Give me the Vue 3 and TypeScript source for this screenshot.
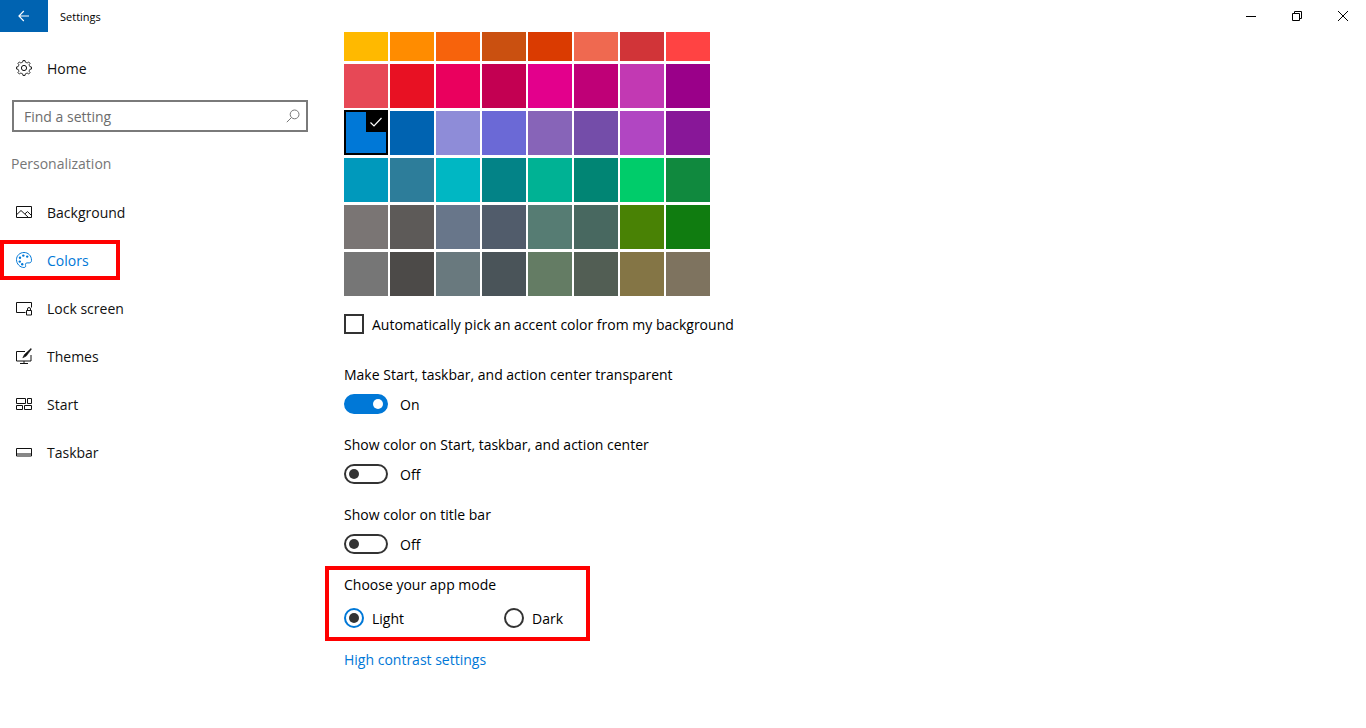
<script setup lang="ts">
const swatches: string[] = [
  '#FFB900','#FF8C00','#F7630C','#CA5010','#DA3B01','#EF6950','#D13438','#FF4343',
  '#E74856','#E81123','#EA005E','#C30052','#E3008C','#BF0077','#C239B3','#9A0089',
  '#0078D7','#0063B1','#8E8CD8','#6B69D6','#8764B8','#744DA9','#B146C2','#881798',
  '#0099BC','#2D7D9A','#00B7C3','#038387','#00B294','#018574','#00CC6A','#10893E',
  '#7A7574','#5D5A58','#68768A','#515C6B','#567C73','#486860','#498205','#107C10',
  '#767676','#4C4A48','#69797E','#4A5459','#647C64','#525E54','#847545','#7E735F',
]
const selected = 16

const gearPts: string[] = []
const teeth = 8
for (let i = 0; i < teeth; i++) {
  const a = (i / teeth) * Math.PI * 2
  const step = (Math.PI * 2) / teeth
  const pts: [number, number][] = [
    [5.9, a - step * 0.5],
    [6.1, a - step * 0.27],
    [7.6, a - step * 0.17],
    [7.6, a + step * 0.17],
    [6.1, a + step * 0.27],
  ]
  for (const [r, t] of pts) {
    gearPts.push(`${(8 + r * Math.cos(t)).toFixed(2)},${(8 + r * Math.sin(t)).toFixed(2)}`)
  }
}
const gear = gearPts.join(' ')

const nav = [
  { id: 'background', label: 'Background' },
  { id: 'colors', label: 'Colors' },
  { id: 'lock', label: 'Lock screen' },
  { id: 'themes', label: 'Themes' },
  { id: 'start', label: 'Start' },
  { id: 'taskbar', label: 'Taskbar' },
]
const toggles = [
  { label: 'Make Start, taskbar, and action center transparent', on: true },
  { label: 'Show color on Start, taskbar, and action center', on: false },
  { label: 'Show color on title bar', on: false },
]
</script>

<template>
  <div class="win">
    <header class="titlebar">
      <button class="back" aria-label="Back">
        <svg width="12" height="12" viewBox="0 0 12 12"><path d="M11 6H1M5.8 1 .9 6l4.9 5" fill="none" stroke="#fff" stroke-width="1.1"/></svg>
      </button>
      <span class="title">Settings</span>
      <div class="controls">
        <span class="ctl"><svg width="10" height="10" viewBox="0 0 10 10"><path d="M0 5.5h10" stroke="#000" stroke-width="1"/></svg></span>
        <span class="ctl"><svg width="10" height="10" viewBox="0 0 10 10"><path d="M.5 2.5h7v7h-7zM2.5 2.5v-2h7v7h-2" fill="none" stroke="#000" stroke-width="1"/></svg></span>
        <span class="ctl"><svg width="10" height="10" viewBox="0 0 10 10"><path d="M0 0l10 10M10 0 0 10" fill="none" stroke="#000" stroke-width="1"/></svg></span>
      </div>
    </header>

    <div class="body">
      <aside class="side">
        <div class="item">
          <svg class="ico" width="16" height="16" viewBox="0 0 16 16" fill="none" stroke="currentColor" stroke-width="1">
            <polygon :points="gear" stroke-width="0.9"/>
            <circle cx="8" cy="8" r="2.6"/>
          </svg>
          <span>Home</span>
        </div>
        <div class="search">
          <span>Find a setting</span>
          <svg width="14" height="14" viewBox="0 0 14 14" fill="none" stroke="#767676" stroke-width="1"><circle cx="8.6" cy="5.4" r="4.4"/><path d="M5.4 8.6.8 13.2"/></svg>
        </div>
        <div class="heading">Personalization</div>
        <div v-for="n in nav" :key="n.id" class="item" :class="{ active: n.id === 'colors' }">
          <svg class="ico" width="16" height="16" viewBox="0 0 16 16" fill="none" stroke="currentColor" stroke-width="1">
            <template v-if="n.id === 'background'">
              <path d="M.5 2.5h15v11H.5z"/>
              <path d="M.8 10.5 5 6.5l7.5 7M9 9.8l2.5-2.2 4 3.9"/>
            </template>
            <template v-else-if="n.id === 'colors'">
              <path d="M8 .5C3.8.5.5 3.6.5 7.6c0 4.300 3.500 7.900 7.400 7.900 1.500 0 2-1 1.700-2-.4-1.300-.1-2.600 1.500-2.600h2.100c1.400 0 2.300-1 2.300-2.600C15.500 3.700 12.200.5 8 .5Z"/>
              <g fill="currentColor" stroke="none">
                <circle cx="4" cy="5.800" r="1.200"/><circle cx="7.300" cy="3.600" r="1.200"/><circle cx="11.200" cy="4.600" r="1.200"/><circle cx="3.800" cy="9.600" r="1.200"/><circle cx="6.200" cy="12.300" r="1.200"/>
              </g>
            </template>
            <template v-else-if="n.id === 'lock'">
              <path d="M9.500 12.500H.5v-10h15v5"/>
              <path d="M10.500 10.500h5v4.500h-5zM11.500 10.500V9a1.500 1.500 0 0 1 3 0v1.500"/>
            </template>
            <template v-else-if="n.id === 'themes'">
              <path d="M9 3.500H.5v9.500h14.500V7M8 13v2M4 15.500h8"/>
              <path d="M15 .5 8.500 6.500 6.800 9.800l3.400-1.700L15.500 1Z" fill="currentColor" stroke-width=".6"/>
            </template>
            <template v-else-if="n.id === 'start'">
              <path d="M.5 2.500h9v5h-9zM11.500 2.500h4v5h-4zM.5 9.500h6v4h-6zM8.500 9.500h7v4h-7z"/>
            </template>
            <template v-else>
              <path d="M.5 4.500h15v7.500H.5zM.5 10h15"/>
            </template>
          </svg>
          <span>{{ n.label }}</span>
          <i v-if="n.id === 'colors'" class="mark mark-nav"></i>
        </div>
      </aside>

      <main class="main">
        <div class="grid">
          <div
            v-for="(c, i) in swatches"
            :key="i"
            class="sw"
            :class="{ sel: i === selected }"
            :style="{ background: c }"
          >
            <span v-if="i === selected" class="tick">
              <svg width="14" height="12" viewBox="0 0 14 12"><path d="M1.500 6.500 5 10l7.500-8" fill="none" stroke="#fff" stroke-width="1.200"/></svg>
            </span>
          </div>
        </div>

        <label class="check"><i class="box"></i><span>Automatically pick an accent color from my background</span></label>

        <section v-for="t in toggles" :key="t.label" class="tg">
          <div class="line">{{ t.label }}</div>
          <div class="tg-row">
            <i class="switch" :class="{ on: t.on }"><b></b></i>
            <span>{{ t.on ? 'On' : 'Off' }}</span>
          </div>
        </section>

        <section class="mode">
          <div class="line">Choose your app mode</div>
          <div class="radios">
            <div class="radio r1"><i class="dot on"><b></b></i><span>Light</span></div>
            <div class="radio"><i class="dot"></i><span>Dark</span></div>
          </div>
          <i class="mark mark-mode"></i>
        </section>

        <a class="link">High contrast settings</a>
      </main>
    </div>
  </div>
</template>

<style scoped>
.win { width: 1366px; height: 728px; display: flex; flex-direction: column; background: #fff; color: #000; font-family: "Open Sans", "Noto Sans", sans-serif; font-size: 14px; overflow: hidden; }
.titlebar { height: 32px; display: flex; align-items: center; flex: none; }
.back { width: 48px; height: 32px; background: #0063b1; border: 0; padding: 0; display: flex; align-items: center; justify-content: center; }
.title { margin-left: 12px; font-size: 11px; }
.controls { margin-left: auto; display: flex; }
.ctl { width: 46px; height: 32px; display: flex; align-items: center; justify-content: center; }
.body { flex: 1; display: flex; min-height: 0; }
.side { width: 320px; flex: none; padding: 12px 12px 0 0; box-sizing: border-box; }
.item { position: relative; height: 48px; display: flex; align-items: center; padding-left: 16px; color: #111; }
.item.active { color: #0078d7; }
.ico { flex: none; margin-right: 15px; }
.search { margin: 8px 0 0 12px; height: 32px; box-sizing: border-box; border: 2px solid #7a7a7a; display: flex; align-items: center; justify-content: space-between; padding: 0 6px 0 10px; color: #6d6d6d; }
.heading { margin: 16px 0 8px 11px; height: 32px; line-height: 32px; color: #767676; }
.mark { position: absolute; border: 4px solid #f00; box-sizing: border-box; display: block; pointer-events: none; }
.mark-nav { left: 0; top: 4px; width: 120px; height: 40px; }
.main { flex: 1; padding-left: 24px; }
.grid { display: grid; grid-template-columns: repeat(8, 44px); grid-template-rows: 29px repeat(5, 44px); column-gap: 2px; row-gap: 3px; }
.sw { position: relative; box-sizing: border-box; }
.sw.sel { border: 2px solid #000; margin-top: -1px; }
.tick { position: absolute; top: 0; right: 0; width: 20px; height: 20px; background: #000; display: flex; align-items: center; justify-content: center; }
.check { display: flex; align-items: center; margin-top: 18px; height: 20px; }
.box { width: 20px; height: 20px; box-sizing: border-box; border: 2px solid #333; margin-right: 8px; }
.tg { margin-top: 21px; }
.check + .tg { margin-top: 31px; }
.line { height: 20px; line-height: 20px; }
.tg-row { display: flex; align-items: center; margin-top: 9px; height: 20px; }
.switch { width: 44px; height: 20px; box-sizing: border-box; border: 2px solid #333; border-radius: 10px; margin-right: 12px; display: flex; align-items: center; padding-left: 3px; }
.switch b { width: 10px; height: 10px; border-radius: 50%; background: #333; }
.switch.on { background: #0078d7; border-color: #0078d7; justify-content: flex-end; padding: 0 3px 0 0; }
.switch.on b { background: #fff; }
.mode { position: relative; margin-top: 21px; }
.radios { display: flex; margin-top: 13px; }
.radio { display: flex; align-items: center; height: 20px; }
.r1 { width: 160px; }
.dot { width: 20px; height: 20px; box-sizing: border-box; border: 2px solid #333; border-radius: 50%; margin-right: 8px; display: flex; align-items: center; justify-content: center; }
.dot.on { border-color: #0078d7; }
.dot b { width: 10px; height: 10px; border-radius: 50%; background: #333; }
.mark-mode { left: -19px; top: -9px; width: 265px; height: 75px; }
.link { display: block; margin-top: 22px; height: 20px; line-height: 20px; color: #0078d7; }
</style>
<style>
html, body { margin: 0; background: #fff; }
</style>
